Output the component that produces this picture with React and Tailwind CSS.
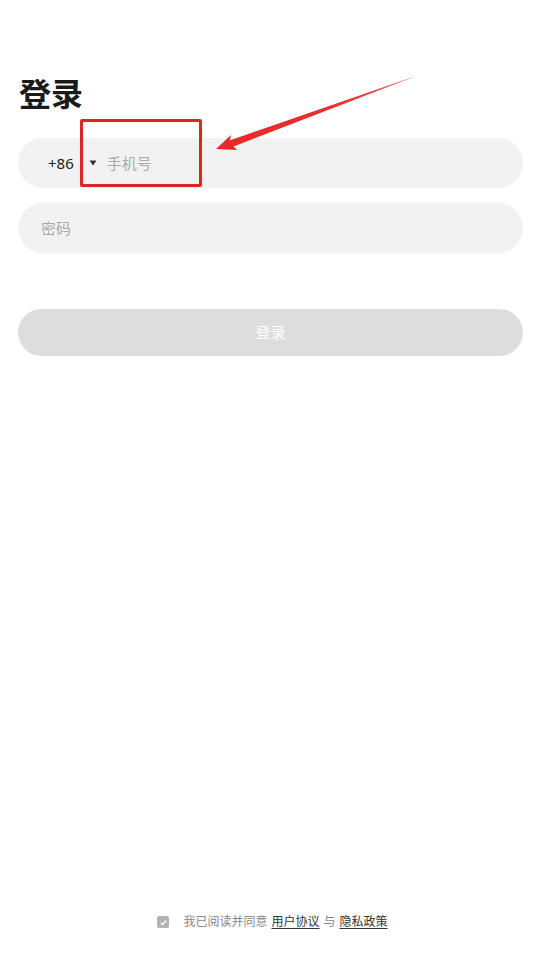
import React from "react";

export default function App() {
  return (
    <div
      className="relative flex h-[956px] w-full flex-col bg-white pl-[18px] pr-[22px] font-['Noto_Sans','Noto_Sans_CJK_SC',sans-serif]"
    >
      <h1 className="mt-[74px] h-[40px] pl-[1px] text-[32px] font-bold leading-[40px] text-[#1a1a1a]">
        登录
      </h1>

      <div className="mt-[24px] flex h-[50px] w-full items-center rounded-full bg-[#f2f2f2] pl-[30px]">
        <span className="text-[15px] text-[#222]">+86</span>
        <svg className="ml-[15px]" width="8" height="6" viewBox="0 0 8 6">
          <path d="M0.5 0.5 L7.5 0.5 L4 5.5 Z" fill="#333" />
        </svg>
        <span className="ml-[10px] text-[15px] text-[#aaa]">手机号</span>
      </div>

      <div className="mt-[15px] flex h-[50px] w-full items-center rounded-full bg-[#f2f2f2] pl-[23px]">
        <span className="text-[15px] text-[#aaa]">密码</span>
      </div>

      <button className="mt-[56px] flex h-[47px] w-full items-center justify-center rounded-full bg-[#dddddd] text-[15px] text-white">
        登录
      </button>

      <div className="mt-auto mb-[25px] flex items-center justify-center pl-[4px] text-[12px] text-[#888]">
        <span className="mr-[14px] flex h-[12px] w-[12px] items-center justify-center rounded-[2px] bg-[#b3b3b3]">
          <svg width="9" height="9" viewBox="0 0 10 10">
            <path d="M2 5.2 L4.2 7.3 L8 2.8" fill="none" stroke="#fff" strokeWidth="1.4" />
          </svg>
        </span>
        <span>我已阅读并同意</span>
        <span className="ml-[4px] text-[#333] underline underline-offset-2">用户协议</span>
        <span className="mx-[4px]">与</span>
        <span className="text-[#333] underline underline-offset-2">隐私政策</span>
      </div>

      {/* annotation overlay: red box */}
      <div className="pointer-events-none absolute left-[80px] top-[119px] h-[68px] w-[122px] rounded-[2px] border-[3px] border-[#e02424]" />

      {/* annotation overlay: arrow */}
      <svg
        className="pointer-events-none absolute left-0 top-0"
        width="545"
        height="956"
        viewBox="0 0 545 956"
      >
        <path d="M416 76 L229 144.5 L228 141 Z" fill="#e82a2a" />
        <path d="M416 76 L231 147.5 L229.5 143.5 Z" fill="#e82a2a" />
        <path d="M216 149 L231 135 L229.5 142 L237 150 Z" fill="#e82a2a" />
      </svg>
    </div>
  );
}
